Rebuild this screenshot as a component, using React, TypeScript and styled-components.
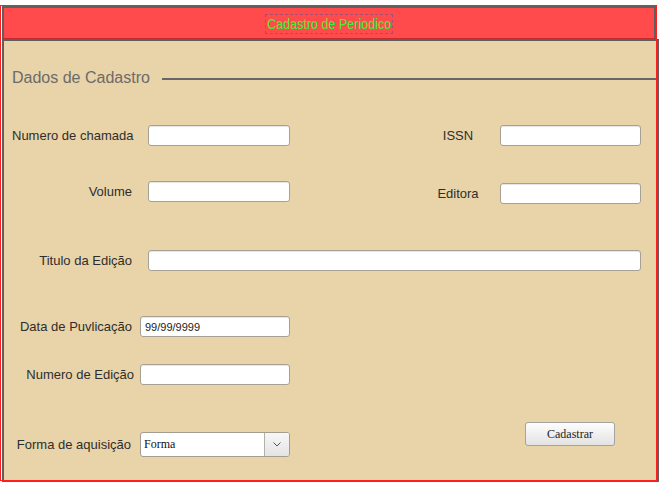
import React from "react";
import styled, { createGlobalStyle } from "styled-components";

const GlobalStyle = createGlobalStyle`
  html, body { margin: 0; padding: 0; background: #ffffff; }
  body { font-family: "Liberation Sans", Arial, sans-serif; }
  * { box-sizing: border-box; }
`;

const Page = styled.div`
  position: relative;
  padding: 6px 0 0 2px;
  width: 670px;
  height: 493px;
`;

const SelectionOutline = styled.div`
  position: absolute;
  left: 0;
  top: 5px;
  width: 657px;
  height: 476px;
  border: 1px solid #ff1f1f;
  pointer-events: none;
`;

const Header = styled.div`
  width: 654px;
  height: 33px;
  background: #ff4b4b;
  border: 2px solid #5f5f5f;
  border-bottom: 1px solid #c42b2b;
  display: flex;
  align-items: center;
  justify-content: center;
`;

const HeaderTitle = styled.div`
  width: 128px;
  height: 20px;
  margin-top: 1px;
  border: 1px dashed #a54f72;
  display: flex;
  align-items: center;
  justify-content: center;
  overflow: visible;
`;

const HeaderText = styled.span`
  display: inline-block;
  font-family: "Liberation Sans", Arial, sans-serif;
  font-size: 15px;
  line-height: 18px;
  color: #3af23a;
  white-space: nowrap;
  transform: scaleX(0.835);
`;

const Panel = styled.div`
  width: 657px;
  height: 443px;
  background: #e9d3a8;
  border: 2px solid #5f5f5f;
  display: flex;
  flex-direction: column;
`;

const LegendRow = styled.div`
  display: flex;
  align-items: center;
  height: 20px;
  margin-top: 27px;
  padding-left: 8px;
`;

const LegendText = styled.span`
  font-size: 16px;
  color: #6b6b6b;
  white-space: nowrap;
`;

const LegendRule = styled.div`
  flex: 1;
  height: 2px;
  background: #666666;
  margin-left: 12px;
  margin-top: 1px;
`;

const Columns = styled.div`
  display: flex;
  margin-top: 37px;
  padding-left: 8px;
`;

const Column = styled.div<{ $gap: number; $offset?: number }>`
  display: flex;
  flex-direction: column;
  gap: ${(p) => p.$gap}px;
  margin-left: ${(p) => p.$offset ?? 0}px;
`;

const Row = styled.div<{ $top?: number }>`
  display: flex;
  align-items: center;
  margin-top: ${(p) => p.$top ?? 0}px;
  padding-left: 8px;
`;

const Field = styled.div<{ $gap: number }>`
  display: flex;
  align-items: center;
  gap: ${(p) => p.$gap}px;
`;

const Label = styled.label<{ $width: number; $align?: string; $shift?: number }>`
  width: ${(p) => p.$width}px;
  text-align: ${(p) => p.$align ?? "right"};
  font-size: 13px;
  color: #2e2e2e;
  white-space: nowrap;
  margin-top: ${(p) => p.$shift ?? 0}px;
`;

const TextInput = styled.input<{ $width: number }>`
  width: ${(p) => p.$width}px;
  height: 21px;
  background: #ffffff;
  border: 1px solid #a7a195;
  border-radius: 3px;
  padding: 0 4px;
  font-family: "Liberation Sans", Arial, sans-serif;
  font-size: 11px;
  color: #222;
  outline: none;
  box-shadow: inset 0 1px 0 #e6e6e6;
`;

const BottomRow = styled.div`
  display: flex;
  align-items: flex-start;
  margin-top: 37px;
  padding-left: 8px;
`;

const SelectBox = styled.div`
  width: 150px;
  height: 25px;
  margin-top: 10px;
  display: flex;
  background: #ffffff;
  border: 1px solid #a39d90;
  border-radius: 3px;
  overflow: hidden;
`;

const SelectValue = styled.div`
  flex: 1;
  font-family: "Liberation Serif", "Times New Roman", serif;
  font-size: 12px;
  color: #111;
  padding-left: 3px;
  line-height: 22px;
`;

const SelectArrow = styled.div`
  width: 25px;
  border-left: 1px solid #b5b0a6;
  background: linear-gradient(#f7f7f7, #e4e4e4);
  display: flex;
  align-items: center;
  justify-content: center;
`;

const SubmitButton = styled.button`
  margin-left: 235px;
  width: 90px;
  height: 24px;
  background: linear-gradient(#fdfdfd, #e3e3e3);
  border: 1px solid #a3a3a3;
  border-radius: 3px;
  font-family: "Liberation Serif", "Times New Roman", serif;
  font-size: 12px;
  color: #222;
  padding: 0;
`;

const LabeledInput = ({
  label,
  labelWidth,
  gap,
  inputWidth,
  align,
  value,
}: {
  label: string;
  labelWidth: number;
  gap: number;
  inputWidth: number;
  align?: string;
  value?: string;
}) => (
  <Field $gap={gap}>
    <Label $width={labelWidth} $align={align}>
      {label}
    </Label>
    <TextInput $width={inputWidth} readOnly defaultValue={value ?? ""} />
  </Field>
);

export default function App() {
  return (
    <>
      <GlobalStyle />
      <Page>
        <Header>
          <HeaderTitle>
            <HeaderText>Cadastro de Periodico</HeaderText>
          </HeaderTitle>
        </Header>
        <Panel>
          <LegendRow>
            <LegendText>Dados de Cadastro</LegendText>
            <LegendRule />
          </LegendRow>
          <Columns>
            <Column $gap={35}>
              <LabeledInput label="Numero de chamada" labelWidth={120} gap={16} inputWidth={142} />
              <LabeledInput label="Volume" labelWidth={120} gap={16} inputWidth={142} />
            </Column>
            <Column $gap={37} $offset={130}>
              <LabeledInput label="ISSN" labelWidth={76} gap={4} inputWidth={141} align="center" />
              <LabeledInput label="Editora" labelWidth={76} gap={4} inputWidth={141} align="center" />
            </Column>
          </Columns>
          <Row $top={46}>
            <LabeledInput label="Titulo da Edição" labelWidth={120} gap={16} inputWidth={493} />
          </Row>
          <Row $top={45}>
            <LabeledInput label="Data de Puvlicação" labelWidth={120} gap={8} inputWidth={150} value="99/99/9999" />
          </Row>
          <Row $top={27}>
            <LabeledInput label="Numero de Edição" labelWidth={122} gap={6} inputWidth={150} />
          </Row>
          <BottomRow>
            <Field $gap={9}>
              <Label $width={119} $shift={10}>
                Forma de aquisição
              </Label>
              <SelectBox>
                <SelectValue>Forma</SelectValue>
                <SelectArrow>
                  <svg width="8" height="5" viewBox="0 0 8 5">
                    <path d="M0.5 0.5 L4 4 L7.5 0.5" fill="none" stroke="#555" strokeWidth="1" />
                  </svg>
                </SelectArrow>
              </SelectBox>
            </Field>
            <SubmitButton type="button">Cadastrar</SubmitButton>
          </BottomRow>
        </Panel>
        <SelectionOutline />
      </Page>
    </>
  );
}
